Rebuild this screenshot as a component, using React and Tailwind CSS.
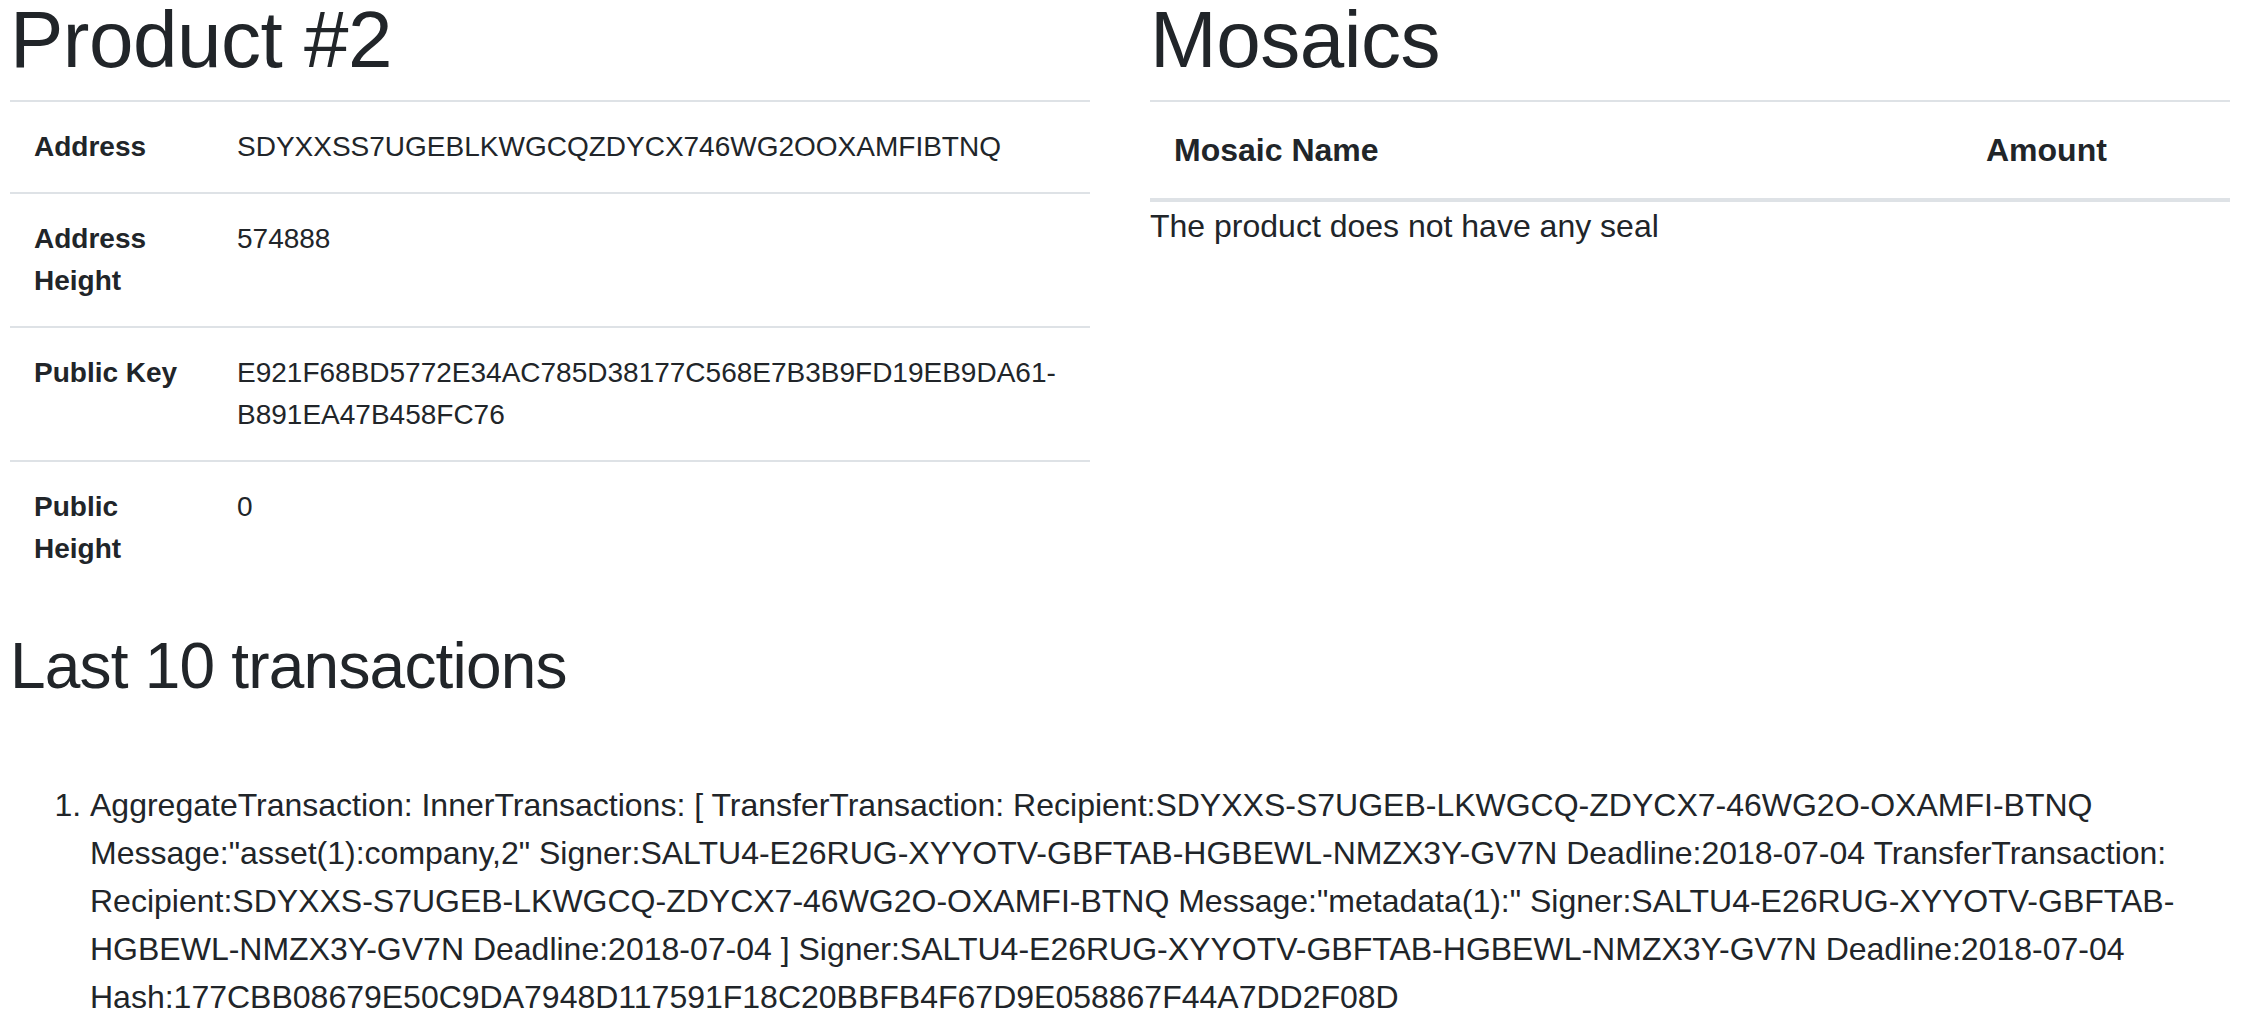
import React from "react";

const rows = [
  { label: "Address", value: "SDYXXSS7UGEBLKWGCQZDYCX746WG2OOXAMFIBTNQ" },
  { label: "Address Height", value: "574888" },
  {
    label: "Public Key",
    value: "E921F68BD5772E34AC785D38177C568E7B3B9FD19EB9DA61-B891EA47B458FC76",
  },
  { label: "Public Height", value: "0" },
];

const tx =
  'AggregateTransaction: InnerTransactions: [ TransferTransaction: Recipient:SDYXXS-S7UGEB-LKWGCQ-ZDYCX7-46WG2O-OXAMFI-BTNQ Message:"asset(1):company,2" Signer:SALTU4-E26RUG-XYYOTV-GBFTAB-HGBEWL-NMZX3Y-GV7N Deadline:2018-07-04 TransferTransaction: Recipient:SDYXXS-S7UGEB-LKWGCQ-ZDYCX7-46WG2O-OXAMFI-BTNQ Message:"metadata(1):" Signer:SALTU4-E26RUG-XYYOTV-GBFTAB-HGBEWL-NMZX3Y-GV7N Deadline:2018-07-04 ] Signer:SALTU4-E26RUG-XYYOTV-GBFTAB-HGBEWL-NMZX3Y-GV7N Deadline:2018-07-04 Hash:177CBB08679E50C9DA7948D117591F18C20BBFB4F67D9E058867F44A7DD2F08D';

export default function App() {
  return (
    <div className="min-h-screen bg-white pl-[10px] pr-[14px] font-['Liberation_Sans',Arial,sans-serif] text-[#212529]">
      <div className="grid grid-cols-2 gap-x-[60px]">
        <div>
          <h1 className="mb-[20px] text-[80px] leading-[80px] font-normal tracking-[-0.5px]">Product #2</h1>
          <div className="mb-[34px]">
            {rows.map((r) => (
              <div
                key={r.label}
                className="grid grid-cols-[203px_1fr] border-t-2 border-[#dee2e6] text-[28px] leading-[42px]"
              >
                <div className="p-[24px] font-bold">{r.label}</div>
                <div className="p-[24px] break-words">{r.value}</div>
              </div>
            ))}
          </div>
        </div>
        <div>
          <h1 className="mb-[20px] text-[80px] leading-[80px] font-normal tracking-[-0.5px]">Mosaics</h1>
          <div className="grid grid-cols-[812px_1fr] border-t-2 border-b-4 border-[#dee2e6] text-[32px] leading-[48px] font-bold">
            <div className="p-[24px]">Mosaic Name</div>
            <div className="p-[24px]">Amount</div>
          </div>
          <p className="text-[32px] leading-[48px]">The product does not have any seal</p>
        </div>
      </div>
      <h2 className="text-[64px] leading-[77px] font-normal tracking-[-0.8px]">Last 10 transactions</h2>
      <ol className="mt-[76px] list-decimal pl-[80px] text-[32px] leading-[48px]">
        <li>{tx}</li>
      </ol>
    </div>
  );
}
